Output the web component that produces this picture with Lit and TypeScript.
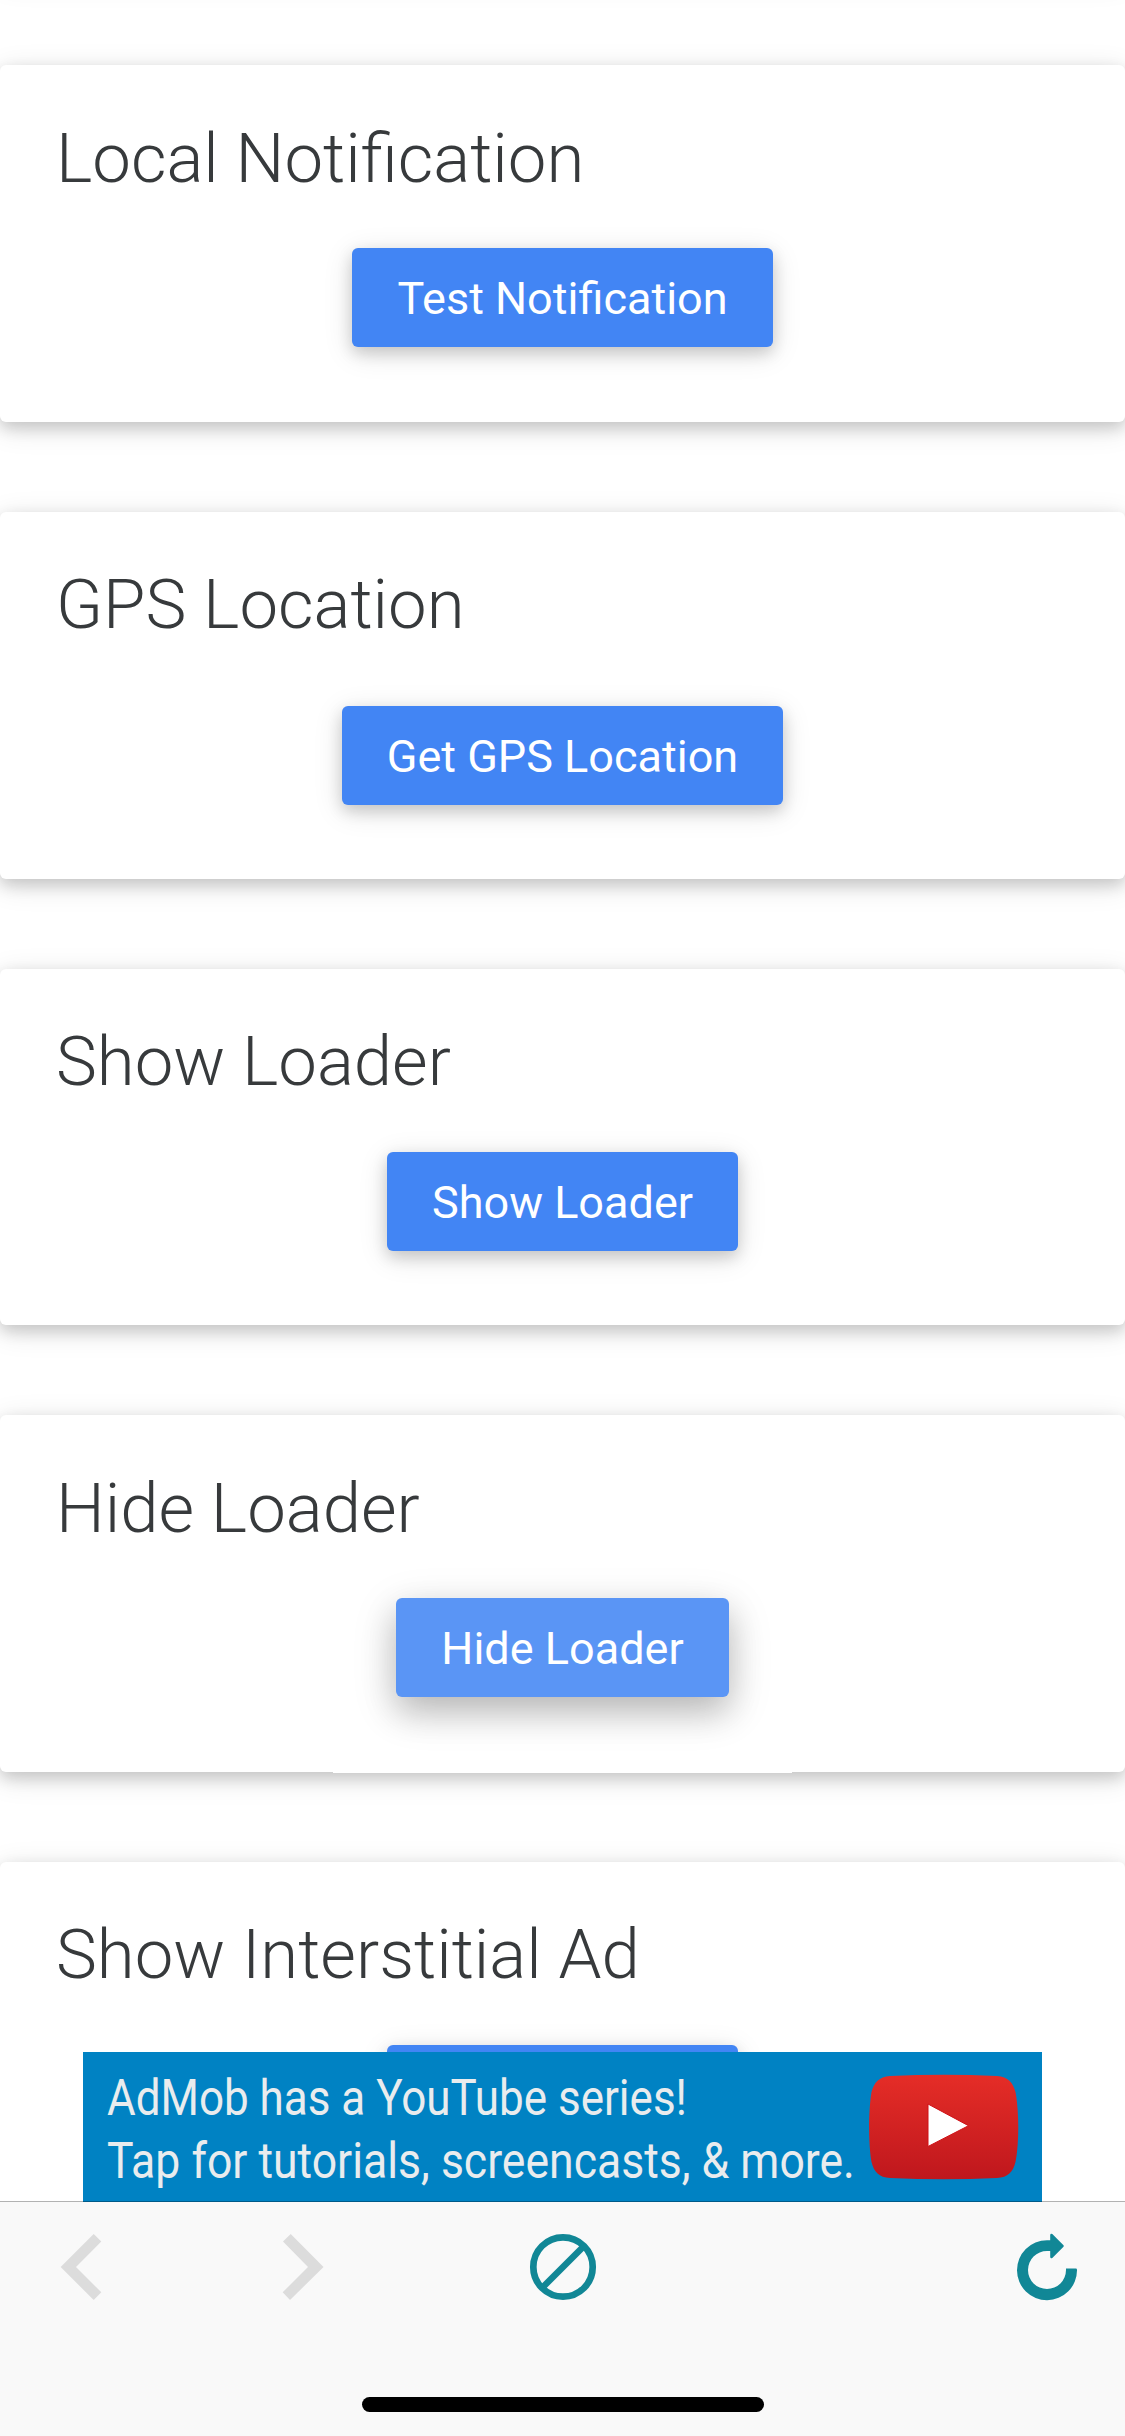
import { LitElement, html, css } from "lit";
import { customElement } from "lit/decorators.js";
import { classMap } from "lit/directives/class-map.js";

interface Demo {
  title: string;
  action?: string;
  kind?: string;
}

const DEMOS: Demo[] = [
  { title: "Local Notification", action: "Test Notification" },
  { title: "GPS Location", action: "Get GPS Location", kind: "tall" },
  { title: "Show Loader", action: "Show Loader" },
  { title: "Hide Loader", action: "Hide Loader", kind: "active" },
  { title: "Show Interstitial Ad", kind: "covered" },
];

@customElement("app-root")
export class AppRoot extends LitElement {
  static styles = css`
    :host {
      display: flex;
      flex-direction: column;
      width: 1125px;
      height: 2436px;
      overflow: hidden;
      background: #fff;
      font-family: Roboto, "Liberation Sans", sans-serif;
    }
    .content {
      position: relative;
      flex: none;
      height: 2202px;
      overflow: hidden;
      display: flex;
      flex-direction: column;
      gap: 90px;
    }
    .card {
      position: relative;
      flex: none;
      box-sizing: border-box;
      height: 356.67px;
      padding: 53.5px 56px 0;
      display: flex;
      flex-direction: column;
      align-items: center;
      background: #fff;
      border-radius: 6px;
      box-shadow: 0 6px 15px rgba(0, 0, 0, 0.16), 0 6px 30px rgba(0, 0, 0, 0.12);
    }
    .card.previous {
      height: 100px;
      margin-top: -125px;
    }
    .card.tall {
      height: 367px;
    }
    .title {
      align-self: stretch;
      height: 80px;
      line-height: 80px;
      margin: 0 0 49.5px;
      font-size: 68.88px;
      font-weight: 300;
      color: #373a3c;
      white-space: nowrap;
    }
    .tall .title {
      margin-bottom: 60.5px;
    }
    .btn {
      flex: none;
      box-sizing: border-box;
      height: 99px;
      padding: 2px 44.9px 0;
      border: 0;
      border-radius: 6px;
      background: #4285f4;
      color: #fff;
      font: 400 45px/97px Roboto, "Liberation Sans", sans-serif;
      white-space: nowrap;
      box-shadow: 0 6px 15px rgba(0, 0, 0, 0.16), 0 6px 30px rgba(0, 0, 0, 0.12);
    }
    .covered .btn {
      width: 351px;
    }
    .active .btn {
      background: #5a95f5;
      box-shadow: 0 15px 33px rgba(0, 0, 0, 0.18), 0 12px 45px rgba(0, 0, 0, 0.15);
    }
    .active::after {
      content: "";
      position: absolute;
      left: 333px;
      bottom: -1px;
      width: 459px;
      height: 2px;
      background: #fff;
    }
    .ad {
      position: absolute;
      left: 83px;
      bottom: 0;
      width: 959px;
      height: 150px;
      box-sizing: border-box;
      padding: 14px 22px 0 24px;
      display: flex;
      justify-content: space-between;
      background: #0082c3;
      color: #e9ecee;
      font-size: 50.5px;
      line-height: 63px;
    }
    .ad-text {
      display: flex;
      flex-direction: column;
      width: 745px;
    }
    .ad-line {
      white-space: nowrap;
      transform: scaleX(0.871);
      transform-origin: 0 0;
    }
    .ad-line + .ad-line {
      transform: scaleX(0.882);
    }
    .play {
      flex: none;
      width: 152px;
      height: 108px;
      margin-top: 7px;
    }
    .edge {
      position: absolute;
      left: 0;
      right: 0;
      bottom: 0;
      height: 1px;
      background: rgba(0, 0, 0, 0.3);
    }
    .toolbar {
      flex: 1;
      box-sizing: border-box;
      padding-top: 30px;
      display: flex;
      flex-direction: column;
      align-items: center;
      background: #f9f9f9;
    }
    .icons {
      align-self: stretch;
      display: flex;
      height: 70px;
      padding: 0 41px 0 59px;
    }
    .icon {
      flex: none;
      width: 70px;
      height: 70px;
    }
    .forward {
      margin-left: 152px;
    }
    .stop {
      margin-left: 177px;
    }
    .reload {
      margin-left: auto;
    }
    .home {
      width: 402px;
      height: 15px;
      margin-top: 95px;
      border-radius: 8px;
      background: #000;
    }
  `;

  render() {
    return html`
      <div class="content">
        <div class="card previous"></div>
        ${DEMOS.map(
          (d) => html`
            <section
              class=${classMap({
                card: true,
                tall: d.kind === "tall",
                active: d.kind === "active",
                covered: d.kind === "covered",
              })}
            >
              <h5 class="title">${d.title}</h5>
              <button class="btn">${d.action ?? ""}</button>
            </section>
          `,
        )}
        <div class="ad">
          <div class="ad-text">
            <span class="ad-line">AdMob has a YouTube series!</span>
            <span class="ad-line">Tap for tutorials, screencasts, &amp; more.</span>
          </div>
          <svg class="play" viewBox="868 2073 152 108">
            <defs>
              <linearGradient id="red" x1="0" y1="0" x2="0" y2="1">
                <stop offset="0" stop-color="#e52d27" />
                <stop offset="1" stop-color="#bf171d" />
              </linearGradient>
            </defs>
            <path
              fill="url(#red)"
              d="M890 2076Q944 2073.6 997 2076C1008 2076.5 1013 2083 1015.5 2092C1019.2 2112 1019.2 2143 1015.5 2162C1013 2172 1008 2177.500 997 2178Q944 2180.500 890 2178C879 2177.500 874 2172 871.500 2162C868.300 2143 868.300 2112 871.500 2092C874 2083 879 2076.500 890 2076Z"
            />
            <path fill="#fff" stroke="#d01016" d="M928 2104L968.500 2125.700L928 2146.500Z" />
          </svg>
        </div>
        <div class="edge"></div>
      </div>
      <nav class="toolbar">
        <div class="icons">
          <svg class="icon" viewBox="59 2232 70 70">
            <path fill="#dcdcdc" d="M93.700 2234L101.300 2241.500L76 2267L101.300 2292.300L93.700 2300L60.700 2267Z" />
          </svg>
          <svg class="icon forward" viewBox="281 2232 70 70">
            <path fill="#dcdcdc" d="M290.700 2234L283 2241.500L308 2267L282.700 2292.300L290 2300L323.500 2267Z" />
          </svg>
          <svg class="icon stop" viewBox="528 2232 70 70">
            <g fill="none" stroke="#118796">
              <circle cx="563" cy="2267" r="29.700" stroke-width="6.700" />
              <path stroke-width="6.500" d="M543 2287L583 2247" />
            </g>
          </svg>
          <svg class="icon reload" viewBox="1014 2232 70 70">
            <path
              fill="#118796"
              d="M1050.200 2240.200V2235Q1050.500 2233 1052.300 2234L1063.500 2245.300Q1064 2246 1063.500 2246.700L1052.300 2258Q1050.500 2259 1050.200 2257V2251H1047A19 19 0 1 0 1066 2270V2268.500H1076.200Q1077 2268.500 1077 2270A30 30 0 1 1 1047 2240.200Z"
            />
          </svg>
        </div>
        <div class="home"></div>
      </nav>
    `;
  }
}
